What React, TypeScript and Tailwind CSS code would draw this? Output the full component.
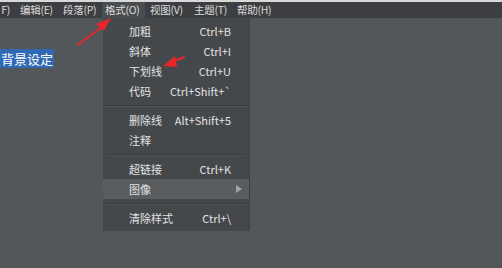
import React from "react";

const font = { fontFamily: '"Noto Sans CJK SC", "Noto Sans", sans-serif' };

type Item = { label: string; shortcut?: string; sub?: boolean; active?: boolean } | "sep";

const items: Item[] = [
  { label: "加粗", shortcut: "Ctrl+B" },
  { label: "斜体", shortcut: "Ctrl+I" },
  { label: "下划线", shortcut: "Ctrl+U" },
  { label: "代码", shortcut: "Ctrl+Shift+`" },
  "sep",
  { label: "删除线", shortcut: "Alt+Shift+5" },
  { label: "注释" },
  "sep",
  { label: "超链接", shortcut: "Ctrl+K" },
  { label: "图像", sub: true, active: true },
  "sep",
  { label: "清除样式", shortcut: "Ctrl+\\" },
];

const menus = [
  { t: "F)", cls: "w-[16px] justify-end pr-[6px]" },
  { t: "编辑(E)", cls: "w-[43px] pl-[4px]" },
  { t: "段落(P)", cls: "w-[43px] pl-[4px]" },
  { t: "格式(O)", cls: "w-[43px] pl-[3px] bg-[#4a4d50]" },
  { t: "视图(V)", cls: "w-[44px] pl-[5px]" },
  { t: "主题(T)", cls: "w-[43px] pl-[5px]" },
  { t: "帮助(H)", cls: "w-[43px] pl-[5px]" },
];

export default function App() {
  return (
    <div className="w-[502px] h-[268px] overflow-hidden flex flex-col bg-[#53575a]" style={font}>
      <div className="h-[2px] bg-[#d9d9d9]" />
      <div className="h-[16px] bg-[#3c3e41] flex items-center text-[10.5px] tracking-[-0.3px] text-[#dcdcdc] leading-[16px]">
        {menus.map((m) => (
          <div key={m.t} className={`h-full flex items-center shrink-0 whitespace-nowrap ${m.cls}`}>
            {m.t}
          </div>
        ))}
      </div>
      <div className="relative flex-1">
        <div className="pt-[27px]">
          <span className="bg-[#2f68b3] text-white text-[13px] leading-[16px] px-[1px]">背景设定</span>
        </div>

        <div className="absolute left-[103px] top-0 w-[147px] bg-[#45484b] pt-[3px] pb-[3px] border-r border-[#3e4144] text-[11px] text-[#e2e2e2]">
          {items.map((it, i) =>
            it === "sep" ? (
              <div key={i} className="h-[9px] flex items-center px-[2px]">
                <div className="w-full h-[2px] border-t border-[#393c3f] border-b border-b-[#505356]" />
              </div>
            ) : (
              <div
                key={i}
                className={`h-[20px] flex items-center pl-[26px] pr-[18px] ${it.active ? "bg-[#5a5d60]" : ""}`}
              >
                <span className="flex-1">{it.label}</span>
                {it.shortcut && <span>{it.shortcut}</span>}
                {it.sub && (
                  <svg width="6" height="8" viewBox="0 0 6 8" className="mr-[-11px]">
                    <path d="M0 0 L6 4 L0 8 Z" fill="#a0a3a6" />
                  </svg>
                )}
              </div>
            )
          )}
        </div>

        <svg className="absolute left-0 top-[-18px]" width="502" height="268" viewBox="0 0 502 268">
          <path d="M78 45 L104 25" stroke="#e8262a" strokeWidth="2" strokeLinecap="round" />
          <path d="M111 18 L96 24 L104 31 Z" fill="#e8262a" />
          <path d="M184 57 L172 62" stroke="#e8262a" strokeWidth="2" strokeLinecap="round" />
          <path d="M163 66 L175 56 L177 67 Z" fill="#e8262a" />
        </svg>
      </div>
    </div>
  );
}
